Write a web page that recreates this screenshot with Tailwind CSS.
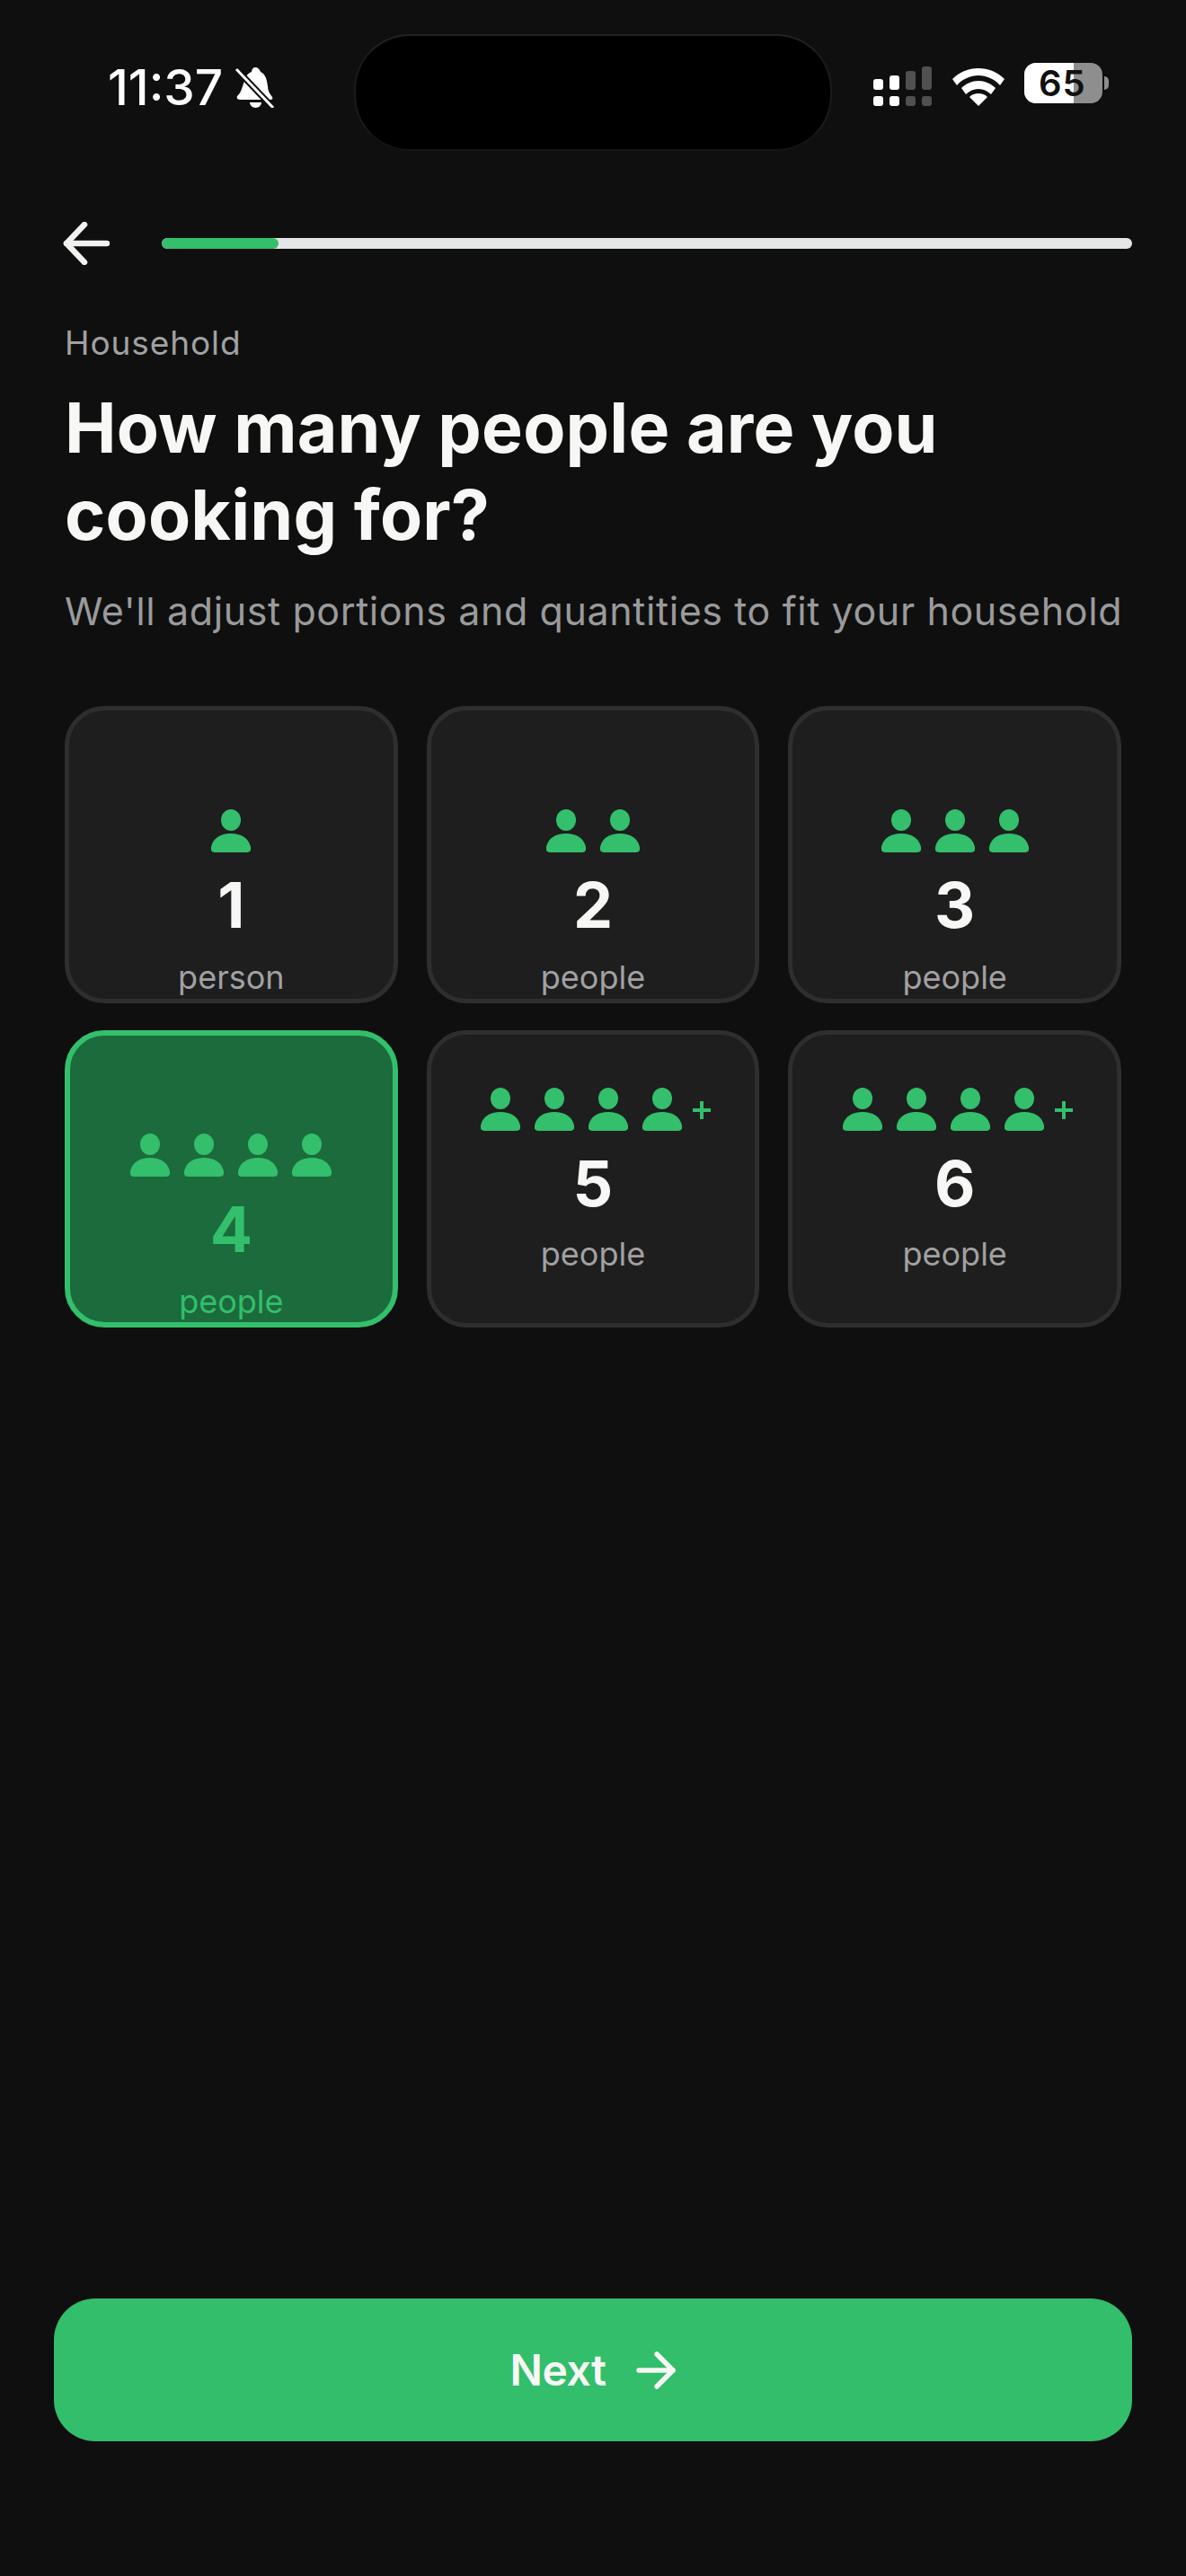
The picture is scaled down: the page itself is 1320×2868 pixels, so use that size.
<!DOCTYPE html>
<html>
<head>
<meta charset="utf-8">
<script src="https://cdn.jsdelivr.net/npm/@tailwindcss/browser@4"></script>
</head>
<body class="m-0 bg-[#0f0f0f]">
<div class="relative flex h-[2868px] w-[1320px] flex-col overflow-hidden bg-[#0f0f0f] font-['Inter',sans-serif] text-white">

  <!-- Dynamic island -->
  <div class="absolute left-[394px] top-[38px] h-[130px] w-[532px] rounded-[62px] border-2 border-t-[#232323] border-x-[#1b1b1b] border-b-[#141414] bg-black"></div>

  <!-- Status bar -->
  <div class="flex h-[245px] items-start justify-between pl-[120px] pr-[86px] pt-[70px]">
    <div class="flex items-center gap-[14px]">
      <span class="text-[55px] font-medium leading-[54px]">11:37</span>
      <svg class="h-[46px] w-[44px]" viewBox="0 0 44 46" fill="none">
        <path d="M22 1c3 0 5 2 6 5 6 3 7 9 8 16 0 5 2 8 5 12 1 2 0 3-2 3L6 37c-3 0-5-1-4-4 3-3 4-5 5-8L11 13c1-3 4-6 7-7 0-3 2-5 4-5z" fill="#fff"/>
        <path d="M16 40h13c0 3-3 6-6.500 6S16 43 16 40z" fill="#fff"/>
        <path d="M0 2l40 42" stroke="#0f0f0f" stroke-width="7"/>
        <path d="M1 3l41 43" stroke="#fff" stroke-width="3"/>
      </svg>
    </div>
    <div class="flex items-start">
      <svg class="mt-[4px] h-[44px] w-[65px]" viewBox="0 0 65 44">
        <rect x="0" y="14" width="11" height="12" rx="3" fill="#fff"/><rect x="0" y="33" width="11" height="11" rx="3" fill="#fff"/>
        <rect x="18" y="10" width="11" height="16" rx="3" fill="#fff"/><rect x="18" y="33" width="11" height="11" rx="3" fill="#fff"/>
        <rect x="36" y="5" width="11" height="21" rx="3" fill="#505050"/><rect x="36" y="33" width="11" height="11" rx="3" fill="#505050"/>
        <rect x="54" y="0" width="11" height="26" rx="3" fill="#505050"/><rect x="54" y="33" width="11" height="11" rx="3" fill="#505050"/>
      </svg>
      <svg class="ml-[23px] mt-[6px] h-[42px] w-[58px]" viewBox="0 0 58 42" fill="#fff">
        <path d="M29 0c11 0 21 4 29 12l-5 7C47 12 38 8 29 8S11 12 5 19L0 12C8 4 18 0 29 0z"/>
        <path d="M29 14c7 0 14 3 19 8l-5 7c-4-4-9-6-14-6s-10 2-14 6l-5-7c5-5 12-8 19-8z"/>
        <path d="M29 28c4 0 7 1 10 4L29 42 19 32c3-3 6-4 10-4z"/>
      </svg>
      <div class="ml-[22px] flex items-center">
        <div class="relative flex h-[45px] w-[87px] items-center rounded-[13px] bg-[#8e8e8e]">
          <div class="h-full w-[55px] rounded-l-[13px] bg-white"></div>
          <span class="absolute left-[16px] top-0 text-[40px] font-semibold leading-[45px] tracking-[1px] text-[#111]">65</span>
        </div>
        <div class="ml-[2px] h-[15px] w-[5px] rounded-r-[5px] bg-[#8e8e8e]"></div>
      </div>
    </div>
  </div>

  <!-- Nav + progress -->
  <div class="flex h-[52px] items-center gap-[58px] pl-[70px] pr-[60px]">
    <svg class="h-[48px] w-[52px] shrink-0" viewBox="0 0 52 48" fill="none" stroke="#f2f2f0" stroke-width="6.500" stroke-linecap="round" stroke-linejoin="round">
      <path d="M24 3L4 24l20 21"/><path d="M4 24h45"/>
    </svg>
    <div class="h-[12px] flex-1 overflow-hidden rounded-full bg-[#e4e5e7]">
      <div class="h-full w-[130px] rounded-full bg-[#33bf6b]"></div>
    </div>
  </div>

  <!-- Heading -->
  <div class="px-[72px] pt-[57px]">
    <p class="text-[37px] leading-[56px] tracking-[0.9px] text-[#a1a1a3]">Household</p>
    <h1 class="mt-[18px] text-[77px] font-bold leading-[97px] tracking-[0.2px] text-[#f7f7f5]">How many people are you<br>cooking for?</h1>
    <p class="mt-[28px] whitespace-nowrap text-[43px] leading-[60px] tracking-[0.6px] text-[#9a9a9c]">We'll adjust portions and quantities to fit your household</p>
  </div>

  <!-- Cards -->
  <div class="mt-[76px] grid grid-cols-3 gap-x-[32px] gap-y-[30px] px-[72px]">

    <div class="flex h-[331px] flex-col items-center rounded-[44px] border-[5px] border-[#2e2e2e] bg-[#1e1e1e] pt-[110px]">
      <div class="flex h-[48px] items-end gap-[16px]">
        <svg class="h-[48px] w-[44px]" viewBox="0 0 44 48" fill="#33bf6b"><ellipse cx="22" cy="12" rx="11" ry="12"/><path d="M0 42C2 32 11 27 22 27s20 5 22 15c1 4-1 6-4 6H4c-3 0-5-2-4-6z"/></svg>
      </div>
      <div class="mt-[23px] text-[70px] font-bold leading-[72px] text-[#f7f7f5]">1</div>
      <div class="mt-[16px] text-[36px] leading-[56px] text-[#a1a1a3]">person</div>
    </div>

    <div class="flex h-[331px] flex-col items-center rounded-[44px] border-[5px] border-[#2e2e2e] bg-[#1e1e1e] pt-[110px]">
      <div class="flex h-[48px] items-end gap-[16px]">
        <svg class="h-[48px] w-[44px]" viewBox="0 0 44 48" fill="#33bf6b"><ellipse cx="22" cy="12" rx="11" ry="12"/><path d="M0 42C2 32 11 27 22 27s20 5 22 15c1 4-1 6-4 6H4c-3 0-5-2-4-6z"/></svg>
        <svg class="h-[48px] w-[44px]" viewBox="0 0 44 48" fill="#33bf6b"><ellipse cx="22" cy="12" rx="11" ry="12"/><path d="M0 42C2 32 11 27 22 27s20 5 22 15c1 4-1 6-4 6H4c-3 0-5-2-4-6z"/></svg>
      </div>
      <div class="mt-[23px] text-[70px] font-bold leading-[72px] text-[#f7f7f5]">2</div>
      <div class="mt-[16px] text-[36px] leading-[56px] text-[#a1a1a3]">people</div>
    </div>

    <div class="flex h-[331px] flex-col items-center rounded-[44px] border-[5px] border-[#2e2e2e] bg-[#1e1e1e] pt-[110px]">
      <div class="flex h-[48px] items-end gap-[16px]">
        <svg class="h-[48px] w-[44px]" viewBox="0 0 44 48" fill="#33bf6b"><ellipse cx="22" cy="12" rx="11" ry="12"/><path d="M0 42C2 32 11 27 22 27s20 5 22 15c1 4-1 6-4 6H4c-3 0-5-2-4-6z"/></svg>
        <svg class="h-[48px] w-[44px]" viewBox="0 0 44 48" fill="#33bf6b"><ellipse cx="22" cy="12" rx="11" ry="12"/><path d="M0 42C2 32 11 27 22 27s20 5 22 15c1 4-1 6-4 6H4c-3 0-5-2-4-6z"/></svg>
        <svg class="h-[48px] w-[44px]" viewBox="0 0 44 48" fill="#33bf6b"><ellipse cx="22" cy="12" rx="11" ry="12"/><path d="M0 42C2 32 11 27 22 27s20 5 22 15c1 4-1 6-4 6H4c-3 0-5-2-4-6z"/></svg>
      </div>
      <div class="mt-[23px] text-[70px] font-bold leading-[72px] text-[#f7f7f5]">3</div>
      <div class="mt-[16px] text-[36px] leading-[56px] text-[#a1a1a3]">people</div>
    </div>

    <div class="flex h-[331px] flex-col items-center rounded-[44px] border-[6px] border-[#33bf6b] bg-[#1b6b3d] pt-[109px]">
      <div class="flex h-[48px] items-end gap-[16px]">
        <svg class="h-[48px] w-[44px]" viewBox="0 0 44 48" fill="#33bf6b"><ellipse cx="22" cy="12" rx="11" ry="12"/><path d="M0 42C2 32 11 27 22 27s20 5 22 15c1 4-1 6-4 6H4c-3 0-5-2-4-6z"/></svg>
        <svg class="h-[48px] w-[44px]" viewBox="0 0 44 48" fill="#33bf6b"><ellipse cx="22" cy="12" rx="11" ry="12"/><path d="M0 42C2 32 11 27 22 27s20 5 22 15c1 4-1 6-4 6H4c-3 0-5-2-4-6z"/></svg>
        <svg class="h-[48px] w-[44px]" viewBox="0 0 44 48" fill="#33bf6b"><ellipse cx="22" cy="12" rx="11" ry="12"/><path d="M0 42C2 32 11 27 22 27s20 5 22 15c1 4-1 6-4 6H4c-3 0-5-2-4-6z"/></svg>
        <svg class="h-[48px] w-[44px]" viewBox="0 0 44 48" fill="#33bf6b"><ellipse cx="22" cy="12" rx="11" ry="12"/><path d="M0 42C2 32 11 27 22 27s20 5 22 15c1 4-1 6-4 6H4c-3 0-5-2-4-6z"/></svg>
      </div>
      <div class="mt-[23px] text-[70px] font-bold leading-[72px] text-[#33bf6b]">4</div>
      <div class="mt-[16px] text-[36px] leading-[56px] text-[#33bf6b]">people</div>
    </div>

    <div class="flex h-[331px] flex-col items-center rounded-[44px] border-[5px] border-[#2e2e2e] bg-[#1e1e1e] pt-[59px]">
      <div class="flex h-[48px] items-end gap-[16px] pl-[6px]">
        <svg class="h-[48px] w-[44px]" viewBox="0 0 44 48" fill="#33bf6b"><ellipse cx="22" cy="12" rx="11" ry="12"/><path d="M0 42C2 32 11 27 22 27s20 5 22 15c1 4-1 6-4 6H4c-3 0-5-2-4-6z"/></svg>
        <svg class="h-[48px] w-[44px]" viewBox="0 0 44 48" fill="#33bf6b"><ellipse cx="22" cy="12" rx="11" ry="12"/><path d="M0 42C2 32 11 27 22 27s20 5 22 15c1 4-1 6-4 6H4c-3 0-5-2-4-6z"/></svg>
        <svg class="h-[48px] w-[44px]" viewBox="0 0 44 48" fill="#33bf6b"><ellipse cx="22" cy="12" rx="11" ry="12"/><path d="M0 42C2 32 11 27 22 27s20 5 22 15c1 4-1 6-4 6H4c-3 0-5-2-4-6z"/></svg>
        <svg class="h-[48px] w-[44px]" viewBox="0 0 44 48" fill="#33bf6b"><ellipse cx="22" cy="12" rx="11" ry="12"/><path d="M0 42C2 32 11 27 22 27s20 5 22 15c1 4-1 6-4 6H4c-3 0-5-2-4-6z"/></svg>
        <svg class="mb-[13px] h-[20px] w-[20px] -ml-[4px]" viewBox="0 0 20 20" stroke="#33bf6b" stroke-width="4"><path d="M0 10h20M10 0v20"/></svg>
      </div>
      <div class="mt-[23px] text-[70px] font-bold leading-[72px] text-[#f7f7f5]">5</div>
      <div class="mt-[14px] text-[36px] leading-[56px] text-[#a1a1a3]">people</div>
    </div>

    <div class="flex h-[331px] flex-col items-center rounded-[44px] border-[5px] border-[#2e2e2e] bg-[#1e1e1e] pt-[59px]">
      <div class="flex h-[48px] items-end gap-[16px] pl-[6px]">
        <svg class="h-[48px] w-[44px]" viewBox="0 0 44 48" fill="#33bf6b"><ellipse cx="22" cy="12" rx="11" ry="12"/><path d="M0 42C2 32 11 27 22 27s20 5 22 15c1 4-1 6-4 6H4c-3 0-5-2-4-6z"/></svg>
        <svg class="h-[48px] w-[44px]" viewBox="0 0 44 48" fill="#33bf6b"><ellipse cx="22" cy="12" rx="11" ry="12"/><path d="M0 42C2 32 11 27 22 27s20 5 22 15c1 4-1 6-4 6H4c-3 0-5-2-4-6z"/></svg>
        <svg class="h-[48px] w-[44px]" viewBox="0 0 44 48" fill="#33bf6b"><ellipse cx="22" cy="12" rx="11" ry="12"/><path d="M0 42C2 32 11 27 22 27s20 5 22 15c1 4-1 6-4 6H4c-3 0-5-2-4-6z"/></svg>
        <svg class="h-[48px] w-[44px]" viewBox="0 0 44 48" fill="#33bf6b"><ellipse cx="22" cy="12" rx="11" ry="12"/><path d="M0 42C2 32 11 27 22 27s20 5 22 15c1 4-1 6-4 6H4c-3 0-5-2-4-6z"/></svg>
        <svg class="mb-[13px] h-[20px] w-[20px] -ml-[4px]" viewBox="0 0 20 20" stroke="#33bf6b" stroke-width="4"><path d="M0 10h20M10 0v20"/></svg>
      </div>
      <div class="mt-[23px] text-[70px] font-bold leading-[72px] text-[#f7f7f5]">6</div>
      <div class="mt-[14px] text-[36px] leading-[56px] text-[#a1a1a3]">people</div>
    </div>
  </div>

  <!-- Next button -->
  <div class="mt-auto px-[60px] pb-[150px]">
    <div class="flex h-[159px] items-center justify-center gap-[34px] rounded-[46px] bg-[#32be6b]">
      <span class="text-[48px] font-semibold leading-[60px] tracking-[-0.5px] text-[#f7f7f5]">Next</span>
      <svg class="h-[42px] w-[44px]" viewBox="0 0 44 42" fill="none" stroke="#f7f7f5" stroke-width="5.500" stroke-linecap="round" stroke-linejoin="round"><path d="M3 21h38"/><path d="M23 3l18 18-18 18"/></svg>
    </div>
  </div>
</div>
</body>
</html>
